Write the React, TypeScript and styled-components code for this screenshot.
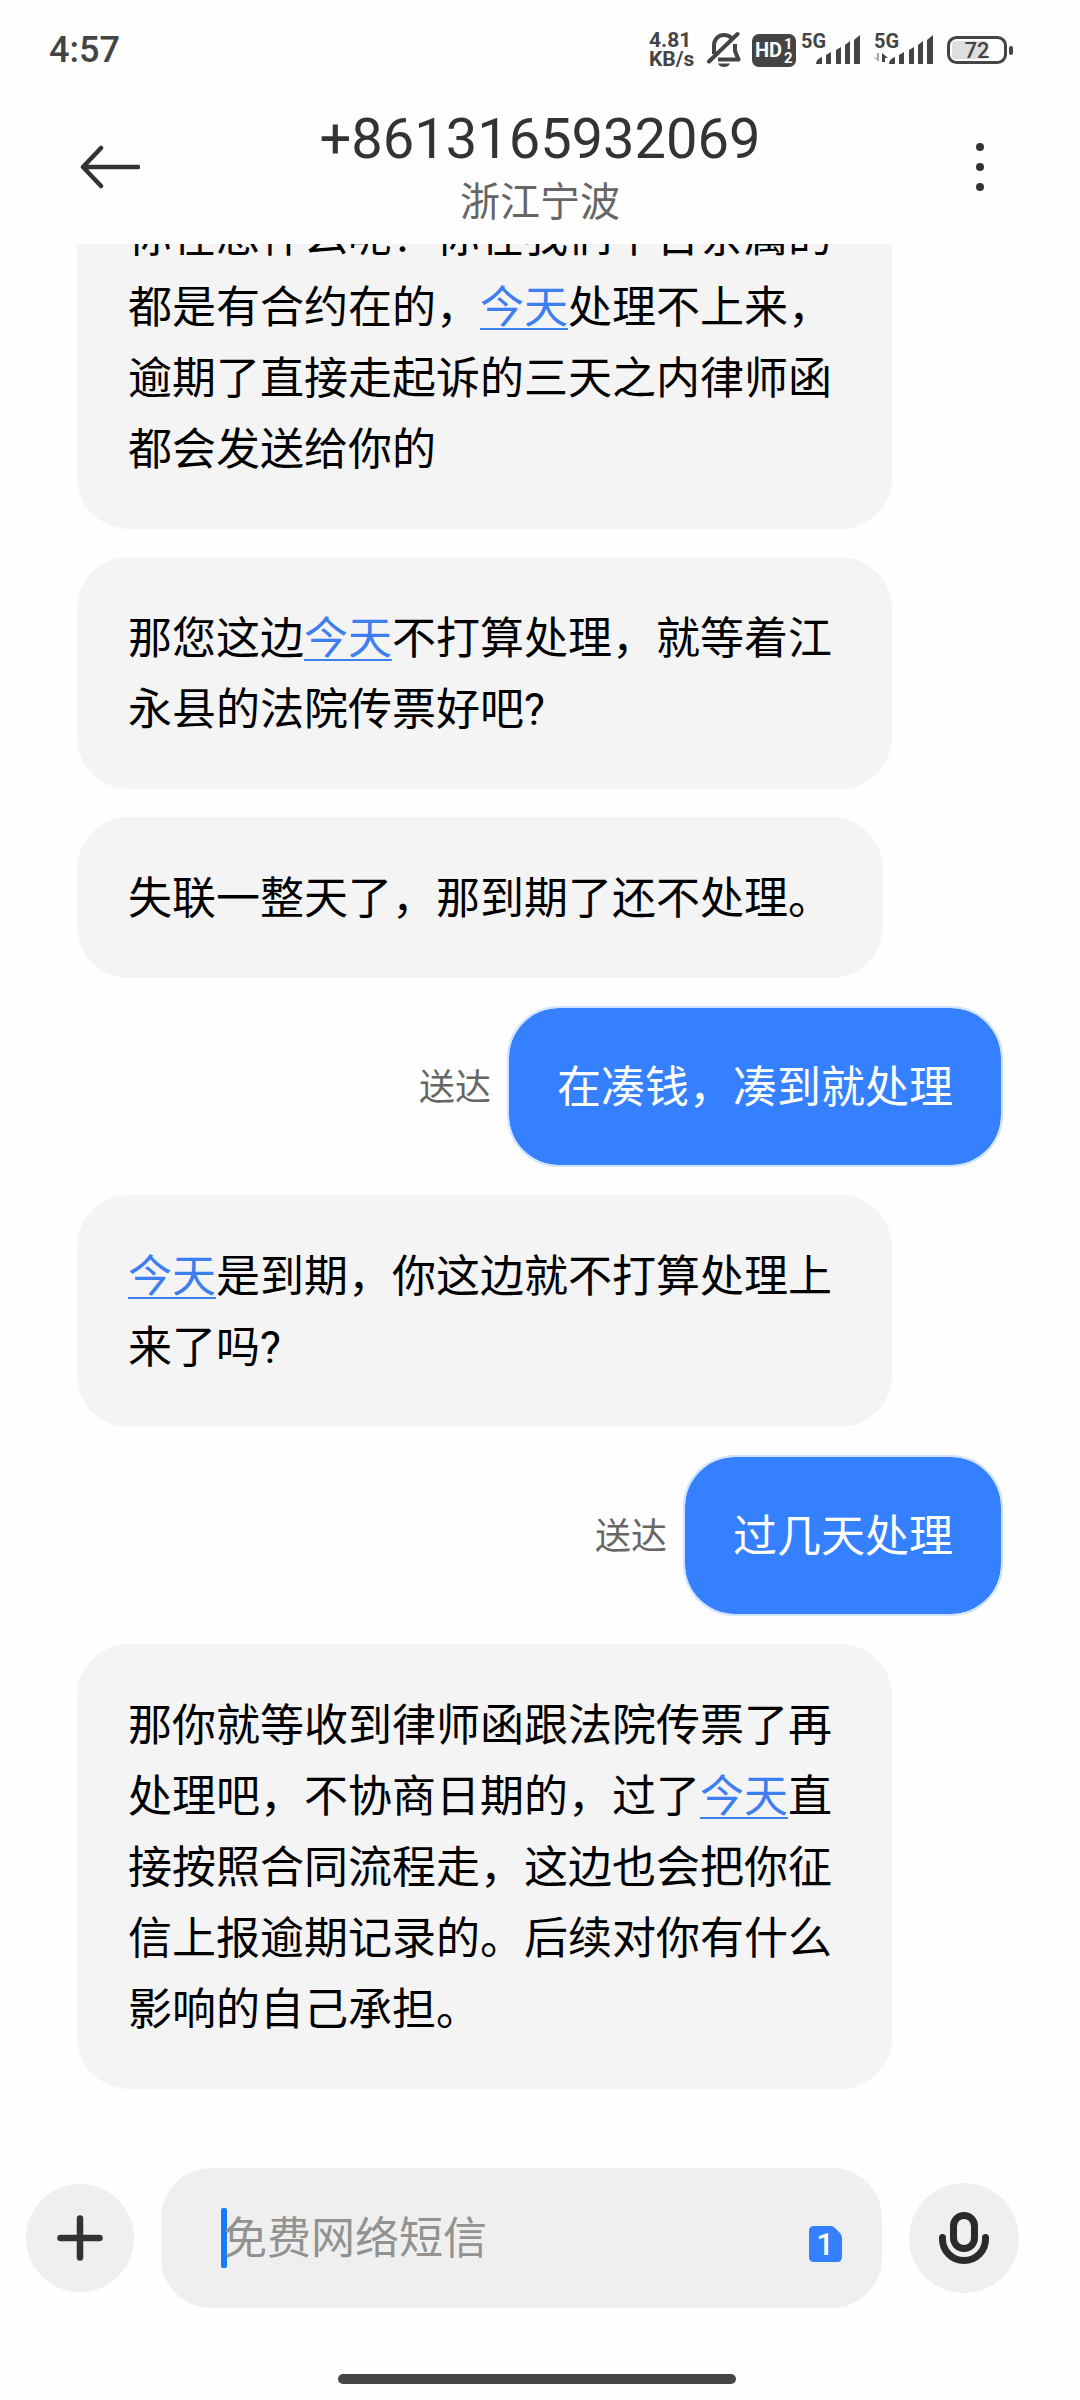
import React from "react";
import styled, { createGlobalStyle, css } from "styled-components";

const GlobalStyle = createGlobalStyle`
  *, *::before, *::after { box-sizing: border-box; }
  html, body, #root { height: 100%; }
  body {
    margin: 0;
    background: #fefefe;
    font-family: Roboto, "Noto Sans CJK SC", sans-serif;
    color: #333;
  }
  button { border: 0; padding: 0; background: none; color: inherit; font: inherit; }
`;

const Screen = styled.div`
  display: flex;
  flex-direction: column;
  height: 100vh;
  overflow: hidden;
`;

const StatusBar = styled.div`
  display: flex;
  align-items: center;
  justify-content: space-between;
  height: 100px;
  padding: 0 67px 0 49px;
  color: #444;
`;

const Clock = styled.time`
  font-size: 36px;
  line-height: 40px;
  font-weight: 500;
`;

const StatusIcons = styled.div`
  display: flex;
  align-items: center;
`;

const NetSpeed = styled.div`
  width: 50px;
  margin-right: 8px;
  font-size: 21px;
  line-height: 19px;
  font-weight: 700;
`;

const StatusGlyph = styled.svg<{ $gap?: number }>`
  display: block;
  margin-right: ${(p) => p.$gap ?? 0}px;
`;

const Header = styled.header`
  display: grid;
  grid-template-columns: 80px 1fr 80px;
  align-items: center;
  height: 144px;
  padding: 0 60px 10px;
  flex: none;
`;

const IconButton = styled.button<{ $align?: string }>`
  display: grid;
  align-items: center;
  justify-items: ${(p) => p.$align ?? "center"};
  height: 60px;
`;

const Contact = styled.div`
  display: flex;
  flex-direction: column;
  align-items: center;
  padding-top: 4px;
`;

const PhoneNumber = styled.h1`
  margin: 0;
  font-size: 56px;
  line-height: 68px;
  font-weight: 400;
`;

const Place = styled.p`
  margin: 0;
  font-size: 40px;
  line-height: 60px;
  color: #666;
`;

const Thread = styled.main`
  display: flex;
  flex: 1;
  flex-direction: column;
  justify-content: flex-end;
  gap: 28px;
  min-height: 0;
  overflow: hidden;
  padding: 0 77px 79px;
`;

const MessageRow = styled.div<{ $sent?: boolean }>`
  display: flex;
  flex: none;
  align-items: center;
  justify-content: ${(p) => (p.$sent ? "flex-end" : "flex-start")};
  gap: 16px;
`;

const Bubble = styled.p<{ $sent?: boolean }>`
  margin: 0;
  max-width: 88%;
  padding: 47px 51px 43px;
  border-radius: 52px;
  background: #f4f4f4;
  color: #000;
  font-size: 44px;
  line-height: 71px;
  ${(p) =>
    p.$sent &&
    css`
      padding: 45px 48px 41px;
      border: 2px solid #cfe2ff;
      background: #3480ff;
      background-clip: padding-box;
      color: #fff;
    `}
`;

const DateLink = styled.a`
  color: #3d7ff0;
  text-decoration: underline;
  text-decoration-thickness: 2px;
  text-underline-offset: 5px;
`;

const Delivery = styled.span`
  padding-top: 2px;
  color: #666;
  font-size: 36px;
  line-height: 48px;
`;

const Composer = styled.form`
  display: flex;
  align-items: center;
  flex: none;
  gap: 27px;
  padding: 0 61px 0 26px;
`;

const RoundButton = styled.button<{ $size: number }>`
  display: grid;
  place-items: center;
  flex: none;
  width: ${(p) => p.$size}px;
  height: ${(p) => p.$size}px;
  border-radius: 50%;
  background: #efefef;
`;

const Field = styled.div`
  display: flex;
  align-items: center;
  flex: 1;
  height: 140px;
  min-width: 0;
  padding: 0 40px 0 60px;
  border-radius: 50px;
  background: #efefef;
`;

const Caret = styled.span`
  flex: none;
  width: 6px;
  height: 60px;
  margin-right: -4px;
  border-radius: 2px;
  background: #147cf5;
`;

const TextInput = styled.input`
  flex: 1;
  min-width: 0;
  height: 72px;
  padding: 2px 0 0;
  border: 0;
  outline: 0;
  background: transparent;
  color: #000;
  font: inherit;
  font-size: 44px;
  &::placeholder { color: #929292; opacity: 1; }
`;

const SimIcon = styled.svg`
  align-self: flex-end;
  margin-bottom: 45px;
`;

const HomeArea = styled.div`
  display: flex;
  flex: none;
  justify-content: center;
  padding: 66px 6px 16px 0;
`;

const HomeIndicator = styled.div`
  width: 37%;
  height: 10px;
  border-radius: 5px;
  background: #454545;
`;

const BellOff = () => (
  <StatusGlyph $gap={11} width="34" height="38" viewBox="0 0 34 38" fill="none" stroke="#444">
    <path d="M7 23V14.500C7 8 11.500 4 17 4C20 4 22.500 5 24.500 7" strokeWidth="4" />
    <path d="M28 13V20L31.500 28.500H11" strokeWidth="4" strokeLinejoin="round" />
    <path d="M2 30.500L30.500 3" strokeWidth="4" strokeLinecap="round" />
    <path d="M11 32.500H23C22 35 19.500 36 17 36S12 35 11 32.500Z" fill="#444" stroke="none" />
  </StatusGlyph>
);

const HdBadge = () => (
  <StatusGlyph $gap={5} width="44" height="33" viewBox="0 0 44 33" fontFamily="Roboto, sans-serif" fontWeight="700" fill="#fff">
    <rect width="44" height="33" rx="7" fill="#444" />
    <text x="3" y="23" fontSize="20">HD</text>
    <text x="32" y="15" fontSize="15">1</text>
    <text x="32" y="29" fontSize="15">2</text>
  </StatusGlyph>
);

const Signal = ({ gap, data }: { gap: number; data?: boolean }) => (
  <StatusGlyph $gap={gap} width="60" height="46" viewBox="0 -4 60 46" fill="#444">
    <text x="0" y="17" fontSize="20" fontFamily="Roboto, sans-serif" fontWeight="700">5G</text>
    {data && (
      <>
        <path d="M5 22V31L0 26.500H3V22Z" fill="#aaa" />
        <path d="M8 31V22L14 27H11V31Z" />
      </>
    )}
    <path d="M15 33Q15 28 21 26V33Z" />
    <path d="M25 24L30 21V33H25Z" />
    <path d="M35 19L40 16V33H35Z" />
    <path d="M44 14L49 10V33H44Z" />
    <path d="M53 9L59 4V33H53Z" />
  </StatusGlyph>
);

const Battery = () => (
  <StatusGlyph width="66" height="28" viewBox="0 0 66 28" fill="#444">
    <rect x="5" y="5" width="35" height="18" rx="3" fill="#dedede" />
    <rect x="1.500" y="1.500" width="57" height="25" rx="8" fill="none" stroke="#444" strokeWidth="3" />
    <rect x="62" y="10" width="4" height="9" rx="2" />
    <text x="30" y="22" fontSize="22" fontFamily="Roboto, sans-serif" fontWeight="500" textAnchor="middle">72</text>
  </StatusGlyph>
);

const Today = () => <DateLink href="#today">今天</DateLink>;

const messages: { sent?: boolean; body: React.ReactNode }[] = [
  { body: <>你在想什么呢？你在我们平台亲属的都是有合约在的，<Today />处理不上来，逾期了直接走起诉的三天之内律师函都会发送给你的</> },
  { body: <>那您这边<Today />不打算处理，就等着江永县的法院传票好吧?</> },
  { body: <>失联一整天了，那到期了还不处理。</> },
  { sent: true, body: <>在凑钱，凑到就处理</> },
  { body: <><Today />是到期，你这边就不打算处理上来了吗?</> },
  { sent: true, body: <>过几天处理</> },
  { body: <>那你就等收到律师函跟法院传票了再处理吧，不协商日期的，过了<Today />直接按照合同流程走，这边也会把你征信上报逾期记录的。后续对你有什么影响的自己承担。</> },
];

export default function App() {
  return (
    <Screen lang="zh-CN">
      <GlobalStyle />
      <StatusBar>
        <Clock>4:57</Clock>
        <StatusIcons>
          <NetSpeed>4.81<br />KB/s</NetSpeed>
          <BellOff />
          <HdBadge />
          <Signal gap={13} />
          <Signal gap={13} data />
          <Battery />
        </StatusIcons>
      </StatusBar>
      <Header>
        <IconButton $align="end" aria-label="返回">
          <svg width="60" height="44" viewBox="0 0 60 44" fill="none" stroke="#333" strokeWidth="4.500" strokeLinecap="round" strokeLinejoin="round">
            <path d="M21 3L3 22L21 41M3 22H58" />
          </svg>
        </IconButton>
        <Contact>
          <PhoneNumber>+8613165932069</PhoneNumber>
          <Place>浙江宁波</Place>
        </Contact>
        <IconButton aria-label="更多">
          <svg width="10" height="50" viewBox="0 0 10 50" fill="#333">
            <circle cx="5" cy="5" r="4" />
            <circle cx="5" cy="25" r="4" />
            <circle cx="5" cy="45" r="4" />
          </svg>
        </IconButton>
      </Header>
      <Thread>
        {messages.map((m, i) => (
          <MessageRow key={i} $sent={m.sent}>
            {m.sent && <Delivery>送达</Delivery>}
            <Bubble $sent={m.sent}>{m.body}</Bubble>
          </MessageRow>
        ))}
      </Thread>
      <Composer onSubmit={(e) => e.preventDefault()}>
        <RoundButton type="button" $size={108} aria-label="添加">
          <svg width="46" height="46" viewBox="0 0 46 46" stroke="#333" strokeWidth="6.500" strokeLinecap="round">
            <path d="M23 3.500V42.500M3.500 23H42.500" />
          </svg>
        </RoundButton>
        <Field>
          <Caret />
          <TextInput aria-label="短信内容" placeholder="免费网络短信" />
          <SimIcon width="33" height="38" viewBox="0 0 33 38">
            <path d="M5 1H22C24 1 25 2 26 3L31 8Q33 10 33 13V32Q33 37 28 37H5Q0 37 0 32V6Q0 1 5 1Z" fill="#3480ff" />
            <text x="16" y="30" fontSize="31" fontWeight="500" fontFamily="Roboto, sans-serif" textAnchor="middle" fill="#fff">1</text>
          </SimIcon>
        </Field>
        <RoundButton type="button" $size={110} aria-label="语音">
          <svg width="50" height="54" viewBox="0 0 50 54" fill="none" stroke="#2b2b2b" strokeWidth="7" strokeLinecap="round">
            <rect x="14.500" y="4.500" width="21" height="33" rx="10.500" />
            <path d="M3.500 26.500V28C3.500 40 13 49.500 25 49.500S46.500 40 46.500 28V26.500" />
          </svg>
        </RoundButton>
      </Composer>
      <HomeArea>
        <HomeIndicator />
      </HomeArea>
    </Screen>
  );
}
